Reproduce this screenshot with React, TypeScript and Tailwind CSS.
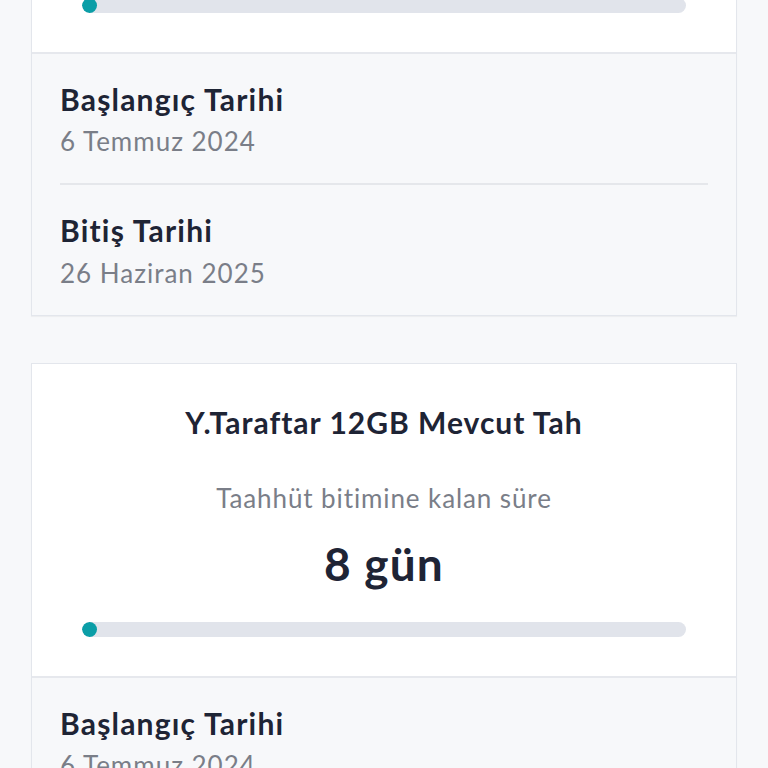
import React from 'react';

interface Commitment {
  name: string;
  daysLeft: number;
  progress: number;
  startDate: string;
  endDate: string;
}

const items: Commitment[] = [
  { name: 'Y.Taraftar 12GB Mevcut Tah', daysLeft: 8, progress: 2, startDate: '6 Temmuz 2024', endDate: '26 Haziran 2025' },
  { name: 'Y.Taraftar 12GB Mevcut Tah', daysLeft: 8, progress: 2, startDate: '6 Temmuz 2024', endDate: '26 Haziran 2025' },
];

const DateRow: React.FC<{ label: string; value: string; gap?: string }> = ({ label, value, gap = 'gap-[6px]' }) => (
  <div className={`flex flex-col ${gap}`}>
    <div className="text-[30px] leading-[36px] font-bold tracking-[1.2px] text-[#1e2435]">{label}</div>
    <div className="text-[26px] leading-[36px] tracking-[1px] text-[#7a7e88]">{value}</div>
  </div>
);

const CommitmentCard: React.FC<{ item: Commitment }> = ({ item }) => (
  <div className="border border-[#e3e6ec] shadow-[0_1px_1px_rgba(0,0,0,0.04)]">
    <div className="bg-white px-[50px] pt-[40px] pb-[39px] flex flex-col items-center">
      <div className="text-[30px] leading-[36px] font-bold tracking-[1px] text-[#1e2435]">{item.name}</div>
      <div className="mt-[42px] text-[26px] leading-[32px] tracking-[0.9px] text-[#7a7e88]">Taahhüt bitimine kalan süre</div>
      <div className="mt-[22px] text-[46px] leading-[56px] font-bold tracking-[1.2px] text-[#1e2435]">{item.daysLeft} gün</div>
      <div className="mt-[30px] w-full h-[15px] rounded-full bg-[#e1e4eb] overflow-hidden">
        <div className="h-full rounded-full bg-[#0b9ea7] min-w-[15px]" style={{ width: `${item.progress}%` }} />
      </div>
    </div>
    <div className="border-t-2 border-[#e6e8ed] bg-[#f7f8fa] px-[28px]">
      <div className="pt-[27px] pb-[24px]">
        <DateRow label="Başlangıç Tarihi" value={item.startDate} />
      </div>
      <div className="border-t-2 border-[#e5e7eb] pt-[27px] pb-[24px]">
        <DateRow label="Bitiş Tarihi" value={item.endDate} gap="gap-[7px]" />
      </div>
    </div>
  </div>
);

export default function App() {
  return (
    <div className="min-h-screen bg-[#f7f8fa] overflow-hidden" style={{ fontFamily: 'Lato, "Noto Sans", sans-serif' }}>
      <div className="mx-[31px] -mt-[261px] flex flex-col gap-[47px] pb-10">
        {items.map((item, i) => (
          <CommitmentCard key={i} item={item} />
        ))}
      </div>
    </div>
  );
}
